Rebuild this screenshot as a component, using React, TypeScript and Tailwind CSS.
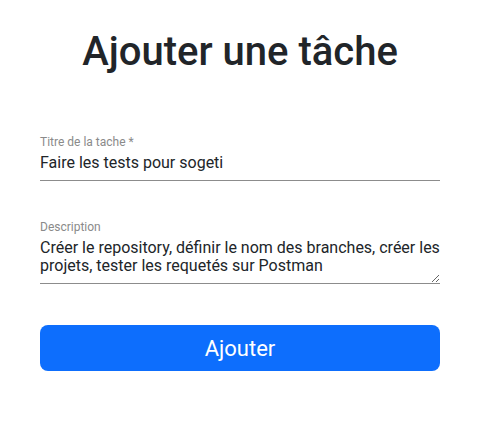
export default function App() {
  return (
    <div className="min-h-screen bg-white font-['Roboto',sans-serif] text-[#212529]">
      <div className="ml-10 w-[400px] pt-[28px]">
        <h1 className="text-center text-[40px] font-medium leading-[1.2]">
          Ajouter une tâche
        </h1>

        <form className="mt-[59px] flex flex-col" onSubmit={(e) => e.preventDefault()}>
          <label className="flex flex-col">
            <span className="text-[12px] leading-[14px] text-[#8a8a8a]">Titre de la tache *</span>
            <input
              type="text"
              defaultValue="Faire les tests pour sogeti"
              className="mt-[4px] border-b border-[#8c8c8c] pb-[8px] text-[16px] leading-[19px] text-[#212529] outline-none"
            />
          </label>

          <label className="mt-[39px] flex flex-col">
            <span className="text-[12px] leading-[14px] text-[#8a8a8a]">Description</span>
            <textarea
              rows={2}
              defaultValue="Créer le repository, définir le nom des branches, créer les projets, tester les requetés sur Postman"
              className="mt-[5px] border-b border-[#8c8c8c] pb-[8px] text-[16px] leading-[18px] text-[#212529] outline-none"
            />
          </label>

          <button
            type="submit"
            className="mt-[41px] h-[46px] rounded-[8px] bg-[#0d6efd] text-[22px] text-white"
          >
            Ajouter
          </button>
        </form>
      </div>
    </div>
  );
}
